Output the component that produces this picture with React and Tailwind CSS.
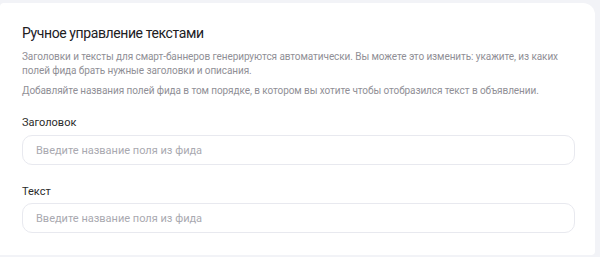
export default function App() {
  const font = { fontFamily: 'Roboto, Inter, sans-serif' };
  return (
    <div className="w-[600px] h-[257px] bg-[#f2f3f7] pt-[3px] pr-[5px] pb-[2px]" style={font}>
      <div className="h-full bg-white rounded-tr-[12px] rounded-br-[4px] rounded-tl-[4px] pl-[22px] pr-[20px] pt-[20px] flex flex-col">
        <h1 className="text-[14px] leading-[20px] tracking-[-0.4px] text-[#21201f] mb-[7px]">Ручное управление текстами</h1>
        <p className="text-[10px] leading-[14px] tracking-[-0.08px] text-[#908f96]">
          Заголовки и тексты для смарт-баннеров генерируются автоматически. Вы можете это изменить: укажите, из каких полей фида брать нужные заголовки и описания.
        </p>
        <p className="text-[10px] leading-[14px] tracking-[-0.08px] text-[#908f96] mt-[6px]">
          Добавляйте названия полей фида в том порядке, в котором вы хотите чтобы отобразился текст в объявлении.
        </p>
        <div className="mt-[17px] text-[11px] leading-[16px] text-[#2b2b2b]">Заголовок</div>
        <input
          className="mt-[4px] h-[30px] w-full rounded-[10px] border border-[#e8e9ef] px-[13px] text-[11px] outline-none placeholder:text-[#a9a9b0]"
          style={font}
          placeholder="Введите название поля из фида"
        />
        <div className="mt-[19px] text-[11px] leading-[16px] text-[#2b2b2b]">Текст</div>
        <input
          className="mt-[3px] h-[30px] w-full rounded-[10px] border border-[#e8e9ef] px-[13px] text-[11px] outline-none placeholder:text-[#a9a9b0]"
          style={font}
          placeholder="Введите название поля из фида"
        />
      </div>
    </div>
  );
}
